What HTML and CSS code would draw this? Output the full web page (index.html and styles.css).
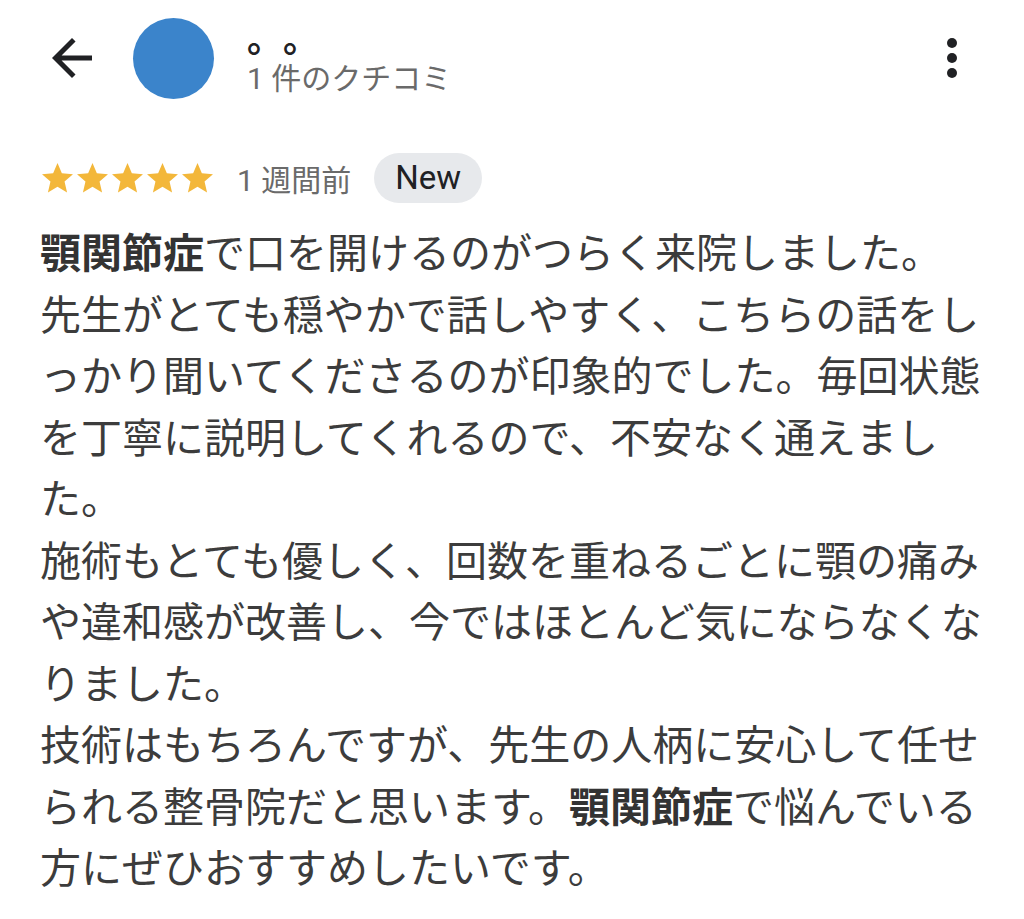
FILE: index.html
```html
<!DOCTYPE html>
<html lang="ja">
<head>
<meta charset="utf-8">
<title>クチコミ</title>
<link rel="stylesheet" href="styles.css">
</head>
<body>
<div class="page">
  <header class="topbar">
    <svg class="back" viewBox="0 0 24 24" width="60" height="60" aria-hidden="true"><path d="M20 11H7.83l5.59-5.59L12 4l-8 8 8 8 1.41-1.41L7.83 13H20v-2z"/></svg>
    <div class="avatar"></div>
    <div class="who">
      <div class="name">。。</div>
      <div class="count">1 件のクチコミ</div>
    </div>
    <svg class="more" viewBox="0 0 24 24" width="60" height="60" aria-hidden="true"><circle cx="12" cy="6" r="2"/><circle cx="12" cy="12" r="2"/><circle cx="12" cy="18" r="2"/></svg>
  </header>

  <section class="review">
    <div class="meta">
      <div class="stars">
        <svg viewBox="2 2 20 19.3" width="31" height="30"><path d="M12 17.27L18.18 21l-1.64-7.03L22 9.24l-7.19-.61L12 2 9.19 8.63 2 9.24l5.46 4.73L5.82 21z"/></svg>
        <svg viewBox="2 2 20 19.3" width="31" height="30"><path d="M12 17.27L18.18 21l-1.64-7.03L22 9.24l-7.19-.61L12 2 9.19 8.63 2 9.24l5.46 4.73L5.82 21z"/></svg>
        <svg viewBox="2 2 20 19.3" width="31" height="30"><path d="M12 17.27L18.18 21l-1.64-7.03L22 9.24l-7.19-.61L12 2 9.19 8.63 2 9.24l5.46 4.73L5.82 21z"/></svg>
        <svg viewBox="2 2 20 19.3" width="31" height="30"><path d="M12 17.27L18.18 21l-1.64-7.03L22 9.24l-7.19-.61L12 2 9.19 8.63 2 9.24l5.46 4.73L5.82 21z"/></svg>
        <svg viewBox="2 2 20 19.3" width="31" height="30"><path d="M12 17.27L18.18 21l-1.64-7.03L22 9.24l-7.19-.61L12 2 9.19 8.63 2 9.24l5.46 4.73L5.82 21z"/></svg>
      </div>
      <span class="when">1 週間前</span>
      <span class="chip">New</span>
    </div>
    <p class="text"><b>顎関節症</b>で口を開けるのがつらく来院しました。<br>先生がとても穏やかで話しやすく、こちらの話をしっかり聞いてくださるのが印象的でした。毎回状態を丁寧に説明してくれるので、不安なく通えました。<br>施術もとても優しく、回数を重ねるごとに顎の痛みや違和感が改善し、今ではほとんど気にならなくなりました。<br>技術はもちろんですが、先生の人柄に安心して任せられる整骨院だと思います。<b>顎関節症</b>で悩んでいる方にぜひおすすめしたいです。</p>
  </section>
</div>
</body>
</html>
```

FILE: styles.css
```css
* { box-sizing: border-box; }
html, body { margin: 0; padding: 0; background: #fff; }
body {
  font-family: Roboto, "Noto Sans CJK JP", sans-serif;
  color: #3c3c3c;
  text-spacing-trim: space-all;
}
.page { width: 1024px; }

.topbar {
  display: flex;
  align-items: center;
  height: 116px;
  padding: 0 42px;
}
.back { fill: #202124; flex: none; }
.avatar {
  width: 81px;
  height: 81px;
  border-radius: 50%;
  background: #3b84cb;
  margin-left: 31px;
  flex: none;
}
.who {
  margin-left: 33px;
  flex: 1;
  align-self: flex-start;
  padding-top: 18px;
  display: flex;
  flex-direction: column;
}
.name {
  font-family: "Noto Sans CJK JP", sans-serif;
  font-size: 36px;
  line-height: 36px;
  height: 30px;
  color: #202124;
  font-weight: 700;
  white-space: pre;
}
.count {
  margin-top: 13px;
  font-size: 30px;
  line-height: 36px;
  color: #6a6a6a;
}
.more { fill: #202124; flex: none; }

.review { padding: 37px 24px 0 40px; }
.meta {
  display: flex;
  align-items: center;
  height: 50px;
}
.stars {
  display: flex;
  gap: 4px;
  margin-left: 2px;
}
.stars svg { fill: #f3b73a; display: block; }
.when {
  margin-left: 24px;
  font-size: 30px;
  color: #6a6a6a;
}
.chip {
  margin-left: 23px;
  height: 50px;
  padding: 0 21px;
  border-radius: 25px;
  background: #e7e9ec;
  color: #202124;
  font-size: 33px;
  line-height: 50px;
}
.text {
  margin: 21px 0 0;
  font-size: 41px;
  line-height: 61.5px;
  line-break: normal;
  color: #3c3c3c;
}
.text b { font-weight: 700; color: #333; }
```
